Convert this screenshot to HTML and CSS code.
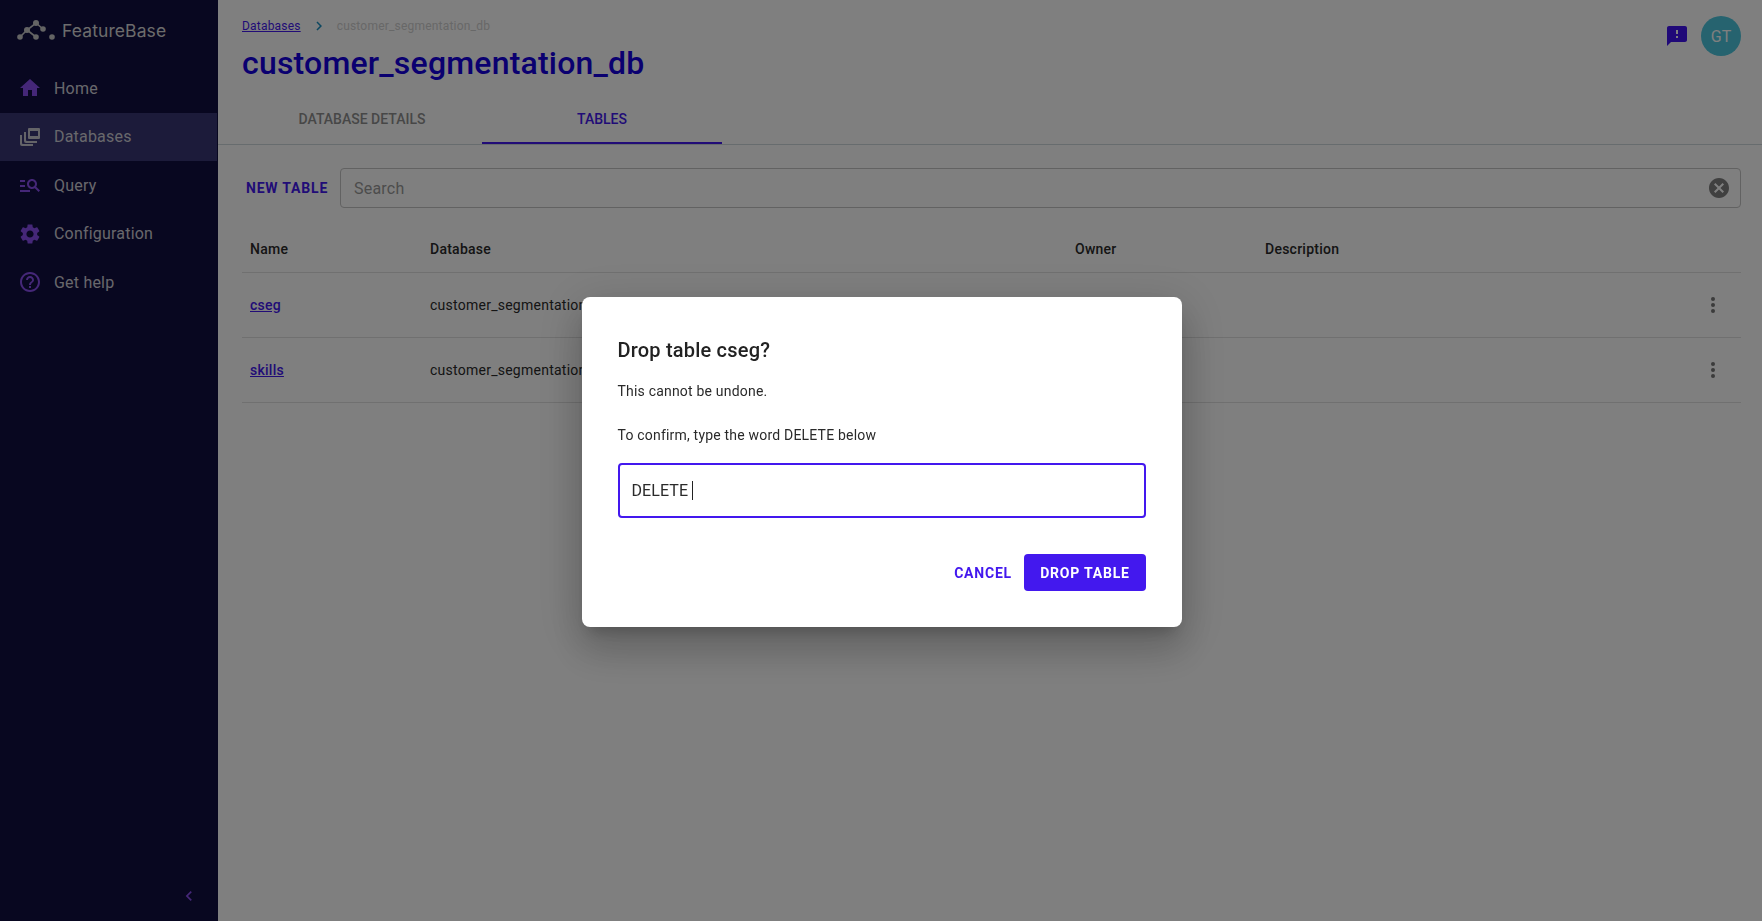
FILE: index.html
```html
<!DOCTYPE html>
<html lang="en">
<head>
    <meta charset="UTF-8">
    <title>FeatureBase - customer_segmentation_db</title>
    <link rel="stylesheet" href="styles.css">
</head>
<body>
    <div class="app">
        <!-- Sidebar -->
        <aside class="sidebar">
            <div class="brand">
                <svg class="brand-mark" viewBox="0 0 38 24" width="38" height="24">
                    <path d="M3 19 L10 12 L19 5 L26 11 M10 12 L19 19" fill="none" stroke="#c8c8c8" stroke-width="1.6"/>
                    <circle cx="3" cy="19" r="2.8" fill="#c8c8c8"/>
                    <circle cx="10" cy="12" r="3" fill="#c8c8c8"/>
                    <circle cx="19" cy="5" r="3" fill="#c8c8c8"/>
                    <circle cx="19" cy="19" r="2.800" fill="#c8c8c8"/>
                    <circle cx="26" cy="11" r="2.800" fill="#c8c8c8"/>
                    <circle cx="35" cy="19" r="2.800" fill="#c8c8c8"/>
                </svg>
                <span class="brand-name">FeatureBase</span>
            </div>
            <nav class="nav">
                <a class="nav-item">
                    <svg viewBox="0 0 24 24"><path d="M10 20v-6h4v6h5v-8h3L12 3 2 12h3v8z"/></svg>
                    <span>Home</span>
                </a>
                <a class="nav-item active">
                    <svg viewBox="0 0 24 24"><path d="M11 3h10a1 1 0 0 1 1 1v9a1 1 0 0 1-1 1H11a1 1 0 0 1-1-1V4a1 1 0 0 1 1-1zm1 3v5h8V6h-8zM6 7h2v8a1 1 0 0 0 1 1h10v2H8a2 2 0 0 1-2-2V7zM2 10h2v8a1 1 0 0 0 1 1h10v2H4a2 2 0 0 1-2-2v-9z"/></svg>
                    <span>Databases</span>
                </a>
                <a class="nav-item">
                    <svg viewBox="0 0 24 24"><path d="M7 9H2V7h5v2zm0 3H2v2h5v-2zm13.590 7l-3.830-3.830c-.8.520-1.740.830-2.760.830-2.760 0-5-2.240-5-5s2.240-5 5-5 5 2.240 5 5c0 1.020-.31 1.960-.83 2.750L22 17.590 20.590 19zM17 11c0-1.650-1.350-3-3-3s-3 1.350-3 3 1.350 3 3 3 3-1.350 3-3zM2 19h10v-2H2v2z"/></svg>
                    <span>Query</span>
                </a>
                <a class="nav-item">
                    <svg viewBox="0 0 24 24"><path d="M19.140 12.940c.04-.3.060-.61.060-.94 0-.32-.02-.64-.07-.94l2.030-1.580c.18-.14.230-.41.120-.61l-1.920-3.320c-.12-.22-.37-.29-.59-.22l-2.390.960c-.5-.38-1.030-.7-1.620-.94l-.36-2.540c-.04-.24-.24-.41-.48-.41h-3.840c-.24 0-.43.170-.47.410l-.36 2.540c-.59.240-1.130.570-1.620.940l-2.390-.96c-.22-.08-.47 0-.59.220L2.740 8.870c-.12.210-.08.470.120.610l2.030 1.580c-.05.3-.09.630-.09.940s.02.640.070.940l-2.030 1.580c-.18.140-.23.410-.12.610l1.920 3.320c.12.220.37.290.59.220l2.390-.96c.5.380 1.030.7 1.620.94l.36 2.540c.05.240.24.410.48.410h3.840c.24 0 .44-.17.47-.41l.36-2.540c.59-.24 1.130-.56 1.620-.94l2.390.96c.22.080.47 0 .59-.22l1.920-3.320c.12-.22.070-.47-.12-.61l-2.010-1.580zM12 15.600c-1.980 0-3.600-1.620-3.600-3.600s1.620-3.600 3.600-3.600 3.600 1.620 3.600 3.600-1.620 3.600-3.600 3.600z"/></svg>
                    <span>Configuration</span>
                </a>
                <a class="nav-item">
                    <svg viewBox="0 0 24 24"><path d="M11 18h2v-2h-2v2zm1-16C6.480 2 2 6.480 2 12s4.480 10 10 10 10-4.480 10-10S17.520 2 12 2zm0 18c-4.410 0-8-3.590-8-8s3.590-8 8-8 8 3.590 8 8-3.590 8-8 8zm0-14c-2.210 0-4 1.790-4 4h2c0-1.100.9-2 2-2s2 .9 2 2c0 2-3 1.750-3 5h2c0-2.250 3-2.500 3-5 0-2.210-1.790-4-4-4z"/></svg>
                    <span>Get help</span>
                </a>
            </nav>
            <button class="collapse">
                <svg viewBox="0 0 24 24" width="20" height="20"><path d="M15.410 7.410 14 6l-6 6 6 6 1.410-1.410L10.830 12z"/></svg>
            </button>
        </aside>

        <!-- Main content -->
        <main class="main">
            <div class="page-head">
                <div>
                    <div class="breadcrumb">
                        <a href="#">Databases</a>
                        <svg viewBox="0 0 24 24" width="18" height="18"><path d="M10 6 8.590 7.410 13.170 12l-4.580 4.590L10 18l6-6z"/></svg>
                        <span>customer_segmentation_db</span>
                    </div>
                    <h1>customer_segmentation_db</h1>
                </div>
                <div class="head-actions">
                    <svg viewBox="0 0 24 24" width="24" height="24"><path d="M20 2H4c-1.100 0-1.990.9-1.990 2L2 22l4-4h14c1.100 0 2-.9 2-2V4c0-1.100-.9-2-2-2zm-7 12h-2v-2h2v2zm0-4h-2V6h2v4z"/></svg>
                    <div class="avatar">GT</div>
                </div>
            </div>

            <div class="tabs">
                <div class="tab">DATABASE DETAILS</div>
                <div class="tab selected">TABLES</div>
            </div>

            <div class="content">
                <div class="toolbar">
                    <button class="new-table">NEW TABLE</button>
                    <div class="search">
                        <span>Search</span>
                        <svg viewBox="0 0 24 24" width="24" height="24"><path d="M12 2C6.470 2 2 6.470 2 12s4.470 10 10 10 10-4.470 10-10S17.530 2 12 2zm5 13.590L15.590 17 12 13.410 8.410 17 7 15.590 10.590 12 7 8.410 8.410 7 12 10.590 15.590 7 17 8.410 13.410 12 17 15.590z"/></svg>
                    </div>
                </div>

                <table class="tables-list">
                    <colgroup>
                        <col class="col-name"><col class="col-db"><col class="col-owner"><col class="col-desc"><col>
                    </colgroup>
                    <thead>
                        <tr><th>Name</th><th>Database</th><th>Owner</th><th>Description</th><th></th></tr>
                    </thead>
                    <tbody>
                        <tr>
                            <td><a href="#">cseg</a></td>
                            <td>customer_segmentation_db</td>
                            <td></td>
                            <td></td>
                            <td class="row-menu"><svg viewBox="0 0 24 24" width="24" height="24"><circle cx="12" cy="6" r="2"/><circle cx="12" cy="12" r="2"/><circle cx="12" cy="18" r="2"/></svg></td>
                        </tr>
                        <tr>
                            <td><a href="#">skills</a></td>
                            <td>customer_segmentation_db</td>
                            <td></td>
                            <td></td>
                            <td class="row-menu"><svg viewBox="0 0 24 24" width="24" height="24"><circle cx="12" cy="6" r="2"/><circle cx="12" cy="12" r="2"/><circle cx="12" cy="18" r="2"/></svg></td>
                        </tr>
                    </tbody>
                </table>
            </div>
        </main>
    </div>

    <!-- Drop table dialog -->
    <div class="backdrop">
        <div class="dialog">
            <h2>Drop table cseg?</h2>
            <p class="warning">This cannot be undone.</p>
            <p class="confirm">To confirm, type the word DELETE below</p>
            <div class="field">DELETE <span class="caret"></span></div>
            <div class="dialog-actions">
                <button class="btn-text">CANCEL</button>
                <button class="btn-primary">DROP TABLE</button>
            </div>
        </div>
    </div>
</body>
</html>
```

FILE: styles.css
```css
/* General styles */
body {
    margin: 0;
    height: 921px;
    overflow: hidden;
    font-family: 'Roboto', sans-serif;
    background-color: #fff;
    color: #2a2a2a;
}

button {
    font-family: inherit;
    border: none;
    background: none;
    padding: 0;
}

.app {
    display: flex;
    height: 921px;
}

/* Sidebar */
.sidebar {
    width: 218px;
    flex-shrink: 0;
    display: flex;
    flex-direction: column;
    background-color: #100e40;
}

.brand {
    display: flex;
    align-items: center;
    gap: 7px;
    height: 64px;
    padding-left: 17px;
    padding-bottom: 4px;
    box-sizing: border-box;
}

.brand-name {
    font-family: 'Inter', sans-serif;
    font-size: 17.500px;
    letter-spacing: 0.1px;
    color: #d8d8d8;
}

.nav {
    display: flex;
    flex-direction: column;
    gap: 0.5px;
}

.nav-item {
    display: flex;
    align-items: center;
    gap: 12px;
    height: 48px;
    padding-left: 18px;
    font-size: 16px;
    letter-spacing: 0.2px;
    color: #d0d0d8;
}

.nav-item svg {
    width: 24px;
    height: 24px;
    fill: #8a4ff0;
}

.nav-item.active {
    background-color: #383674;
    margin-right: 1px;
}

.nav-item.active svg {
    fill: #c8c8d0;
}

.collapse {
    margin-top: auto;
    margin-bottom: 15px;
    align-self: flex-end;
    margin-right: 19px;
    height: 20px;
    line-height: 0;
}

.collapse svg {
    fill: #8a4ff0;
}

/* Main area */
.main {
    flex: 1;
    min-width: 0;
}

.page-head {
    display: flex;
    justify-content: space-between;
    padding: 16px 21px 0 24px;
    height: 94px;
    box-sizing: border-box;
}

.breadcrumb {
    display: flex;
    align-items: center;
    gap: 9px;
    height: 20px;
    font-size: 12px;
    letter-spacing: 0.2px;
    color: #d0d0d0;
}

.breadcrumb a {
    color: #4318ee;
}

.breadcrumb svg {
    fill: #1a8fc0;
}

h1 {
    margin: 7px 0 0;
    font-size: 32px;
    font-weight: 500;
    line-height: 40px;
    letter-spacing: 0.2px;
    color: #1400e0;
}

.head-actions {
    display: flex;
    align-items: center;
    gap: 12px;
    height: 40px;
}

.head-actions svg {
    fill: #4012f0;
}

.avatar {
    width: 40px;
    height: 40px;
    border-radius: 50%;
    background-color: #4cc6de;
    color: #fff;
    font-size: 16px;
    display: flex;
    align-items: center;
    justify-content: center;
}

/* Tabs */
.tabs {
    display: flex;
    height: 50px;
    padding-left: 24px;
    border-bottom: 1px solid #cfd8dc;
}

.tab {
    width: 240px;
    height: 50px;
    padding-top: 2px;
    display: flex;
    align-items: center;
    justify-content: center;
    font-size: 14px;
    font-weight: 500;
    color: #8f8f8f;
    box-sizing: border-box;
    border-bottom: 2px solid transparent;
}

.tab.selected {
    color: #4318ee;
    border-bottom-color: #4318ee;
}

/* Toolbar */
.content {
    padding: 23px 21px 0 24px;
}

.toolbar {
    display: flex;
    align-items: center;
    gap: 12px;
    padding-left: 4px;
}

.new-table {
    font-size: 14px;
    font-weight: 700;
    letter-spacing: 0.8px;
    color: #4318ee;
    white-space: nowrap;
}

.search {
    flex: 1;
    height: 40px;
    box-sizing: border-box;
    display: flex;
    align-items: center;
    justify-content: space-between;
    padding: 0 9px 0 13px;
    border: 1px solid #c4c4c4;
    border-radius: 4px;
    font-size: 16px;
    letter-spacing: 0.2px;
    color: #999;
}

.search svg {
    fill: #808080;
}

/* Table */
.tables-list {
    width: 100%;
    margin-top: 17px;
    border-collapse: collapse;
    table-layout: fixed;
    font-size: 14px;
    letter-spacing: 0.25px;
}

.col-name { width: 180px; }
.col-db { width: 645px; }
.col-owner { width: 190px; }
.col-desc { width: 300px; }

.tables-list th {
    height: 47px;
    padding: 0 8px;
    text-align: left;
    font-weight: 500;
    border-bottom: 1px solid #e0e0e0;
}

.tables-list td {
    height: 64px;
    padding: 0 8px;
    white-space: nowrap;
    border-bottom: 1px solid #e0e0e0;
}

.tables-list a {
    color: #4318ee;
    font-weight: 500;
}

.row-menu {
    text-align: right;
    line-height: 0;
}

.row-menu svg {
    fill: #777;
    margin-right: 8px;
}

/* Dialog */
.backdrop {
    position: fixed;
    top: 0;
    left: 0;
    right: 0;
    bottom: 0;
    background-color: rgba(0, 0, 0, 0.5);
}

.dialog {
    position: absolute;
    top: 297px;
    left: 582px;
    width: 600px;
    height: 330px;
    box-sizing: border-box;
    padding: 40px 36px 0 35.500px;
    background-color: #fff;
    border-radius: 8px;
    box-shadow: 0 11px 15px -7px rgba(0,0,0,0.2), 0 24px 38px 3px rgba(0,0,0,0.14), 0 9px 46px 8px rgba(0,0,0,0.12);
}

h2 {
    margin: 0;
    font-size: 20px;
    font-weight: 500;
    line-height: 26px;
    letter-spacing: 0.2px;
    color: #222;
}

.warning,
.confirm {
    margin: 0;
    font-size: 14px;
    line-height: 20px;
    letter-spacing: 0.2px;
}

.warning {
    margin-top: 18px;
}

.confirm {
    margin-top: 24px;
}

.field {
    margin-top: 18px;
    height: 55px;
    box-sizing: border-box;
    display: flex;
    align-items: center;
    gap: 4px;
    padding-left: 12px;
    border: 2px solid #4318ee;
    border-radius: 4px;
    font-size: 16px;
    letter-spacing: 0.1px;
}

.caret {
    width: 1px;
    height: 19px;
    background-color: #222;
}

.dialog-actions {
    display: flex;
    justify-content: flex-end;
    align-items: center;
    gap: 12px;
    margin-top: 36px;
}

.btn-text {
    font-size: 14px;
    font-weight: 700;
    letter-spacing: 0.8px;
    color: #4318ee;
}

.btn-primary {
    width: 122px;
    height: 37px;
    font-size: 14px;
    font-weight: 700;
    letter-spacing: 0.8px;
    color: #fff;
    background-color: #4318ee;
    border-radius: 4px;
}
```
